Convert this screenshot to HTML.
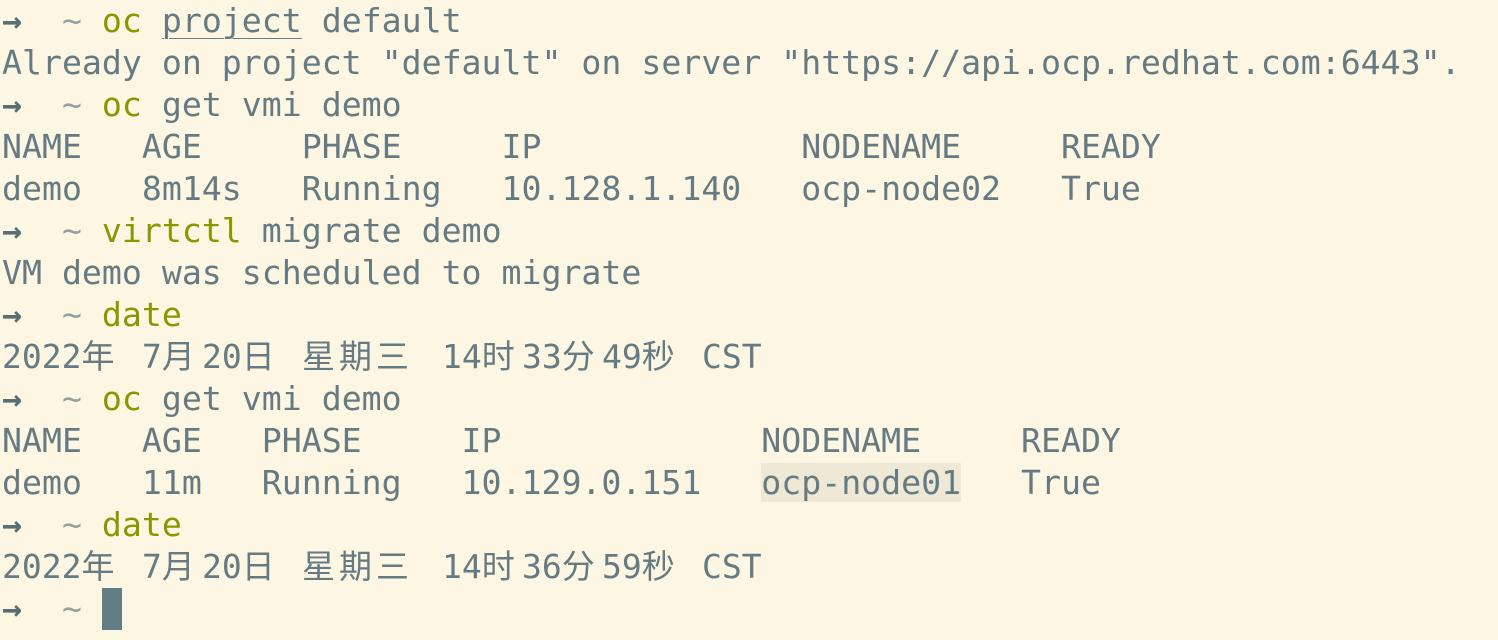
<!DOCTYPE html>
<html><head><meta charset="utf-8"><style>
body{margin:0;width:1498px;height:640px;background:#fdf6e3;overflow:hidden;position:relative;}
.l{position:absolute;left:2px;height:42px;line-height:42px;white-space:pre;font-family:"DejaVu Sans Mono","Liberation Mono","Noto Sans CJK SC",monospace;font-size:33.2px;color:#657b83;}
.a{color:#586e75;font-weight:bold}
.t{color:#93a1a1}
.g{color:#859900}
.u{text-decoration:underline;text-decoration-thickness:1px;text-underline-offset:6px}
.h{background:#eee8d5}
.c{position:absolute;font-family:"DejaVu Sans Mono","Noto Sans CJK SC",monospace;font-size:33px;color:#657b83;white-space:pre;line-height:42px;height:42px}
</style></head><body>
<div class="l" style="top:0px"><span class="a">→</span>  <span class="t">~</span> <span class="g">oc</span> <span class="u">project</span> default</div>
<div class="l" style="top:42px">Already on project "default" on server "https://api.ocp.redhat.com:6443".</div>
<div class="l" style="top:84px"><span class="a">→</span>  <span class="t">~</span> <span class="g">oc</span> get vmi demo</div>
<div class="l" style="top:126px">NAME   AGE     PHASE     IP             NODENAME     READY</div>
<div class="l" style="top:168px">demo   8m14s   Running   10.128.1.140   ocp-node02   True</div>
<div class="l" style="top:210px"><span class="a">→</span>  <span class="t">~</span> <span class="g">virtctl</span> migrate demo</div>
<div class="l" style="top:252px">VM demo was scheduled to migrate</div>
<div class="l" style="top:294px"><span class="a">→</span>  <span class="t">~</span> <span class="g">date</span></div>
<div class="c" style="top:336px;left:2px">2022年</div><div class="c" style="top:336px;left:142px">7月</div><div class="c" style="top:336px;left:202px">20日</div><div class="c" style="top:336px;left:302px">星</div><div class="c" style="top:336px;left:339px">期</div><div class="c" style="top:336px;left:376px">三</div><div class="c" style="top:336px;left:442px">14时</div><div class="c" style="top:336px;left:522px">33分</div><div class="c" style="top:336px;left:602px">49秒</div><div class="c" style="top:336px;left:702px">CST</div>
<div class="l" style="top:378px"><span class="a">→</span>  <span class="t">~</span> <span class="g">oc</span> get vmi demo</div>
<div class="l" style="top:420px">NAME   AGE   PHASE     IP             NODENAME     READY</div>
<div class="l" style="top:462px">demo   11m   Running   10.129.0.151   <span class="h">ocp-node01</span>   True</div>
<div class="l" style="top:504px"><span class="a">→</span>  <span class="t">~</span> <span class="g">date</span></div>
<div class="c" style="top:546px;left:2px">2022年</div><div class="c" style="top:546px;left:142px">7月</div><div class="c" style="top:546px;left:202px">20日</div><div class="c" style="top:546px;left:302px">星</div><div class="c" style="top:546px;left:339px">期</div><div class="c" style="top:546px;left:376px">三</div><div class="c" style="top:546px;left:442px">14时</div><div class="c" style="top:546px;left:522px">36分</div><div class="c" style="top:546px;left:602px">59秒</div><div class="c" style="top:546px;left:702px">CST</div>
<div class="l" style="top:588px"><span class="a">→</span>  <span class="t">~</span></div>
<div style="position:absolute;left:102px;top:588px;width:20px;height:42px;background:#637d86"></div>
</body></html>
